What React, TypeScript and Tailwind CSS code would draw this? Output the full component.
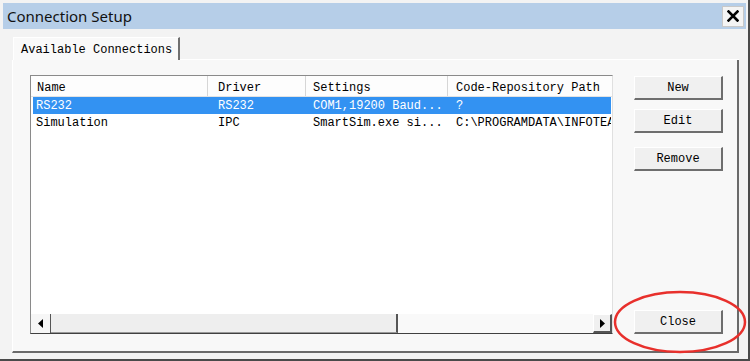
import React from "react";

const mono = { fontFamily: '"Liberation Mono", "DejaVu Sans Mono", monospace' };

function Btn({ label, className = "" }: { label: string; className?: string }) {
  return (
    <div
      className={`h-[24px] w-[89px] flex items-center justify-center bg-[#f0f0f0] border-t border-l border-t-[#ffffff] border-l-[#ffffff] border-r-2 border-b-2 border-r-[#6e6e6e] border-b-[#6e6e6e] text-[12px] text-black ${className}`}
      style={mono}
    >
      {label}
    </div>
  );
}

const rows = [
  { name: "RS232", driver: "RS232", settings: "COM1,19200 Baud...", path: "?", sel: true },
  { name: "Simulation", driver: "IPC", settings: "SmartSim.exe si...", path: "C:\\PROGRAMDATA\\INFOTEAM", sel: false },
];

export default function App() {
  return (
    <div className="relative w-[750px] h-[361px] overflow-hidden bg-[#f3f3f3]">
      <div className="absolute inset-0 flex flex-col pt-[3px] pl-[3px] pr-[2px] pb-[2px] border-r-[2px] border-b-[2px] border-r-[#4a4a4a] border-b-[#4a4a4a]">
        {/* title bar */}
        <div className="h-[26px] flex items-center justify-between bg-[#b6cee8] pl-[4px]">
          <span className="text-[15px] text-[#111] leading-none" style={{ fontFamily: '"Noto Sans", "Open Sans", sans-serif' }}>
            Connection Setup
          </span>
          <div className="w-[22px] h-[21px] mr-[2px] bg-[#f4f4f4] border border-[#c8c8c8] flex items-center justify-center">
            <svg width="12" height="12" viewBox="0 0 12 12">
              <path d="M1.5 1.5 L10.5 10.5 M10.5 1.5 L1.5 10.5" stroke="#000" strokeWidth="2.6" strokeLinecap="square" />
            </svg>
          </div>
        </div>
        {/* body */}
        <div className="flex-1 flex flex-col pl-[9px] pr-[7px] pt-[8px] pb-[4px]">
          <div className="flex items-end h-[23px]">
            <div
              className="h-[23px] w-[167px] ml-[1px] flex items-center pl-[7px] pt-[1px] bg-[#f9f9f9] border-t border-l border-white border-r-2 border-r-[#707070] text-[12px] text-black"
              style={mono}
            >
              Available Connections
            </div>
            <div className="flex-1 border-b border-white" />
          </div>
          <div className="flex-1 flex bg-[#f8f8f8] border-l border-white border-r-2 border-b-2 border-r-[#6a6a6a] border-b-[#6a6a6a] pl-[17px] pr-[16px] pt-[15px] pb-[17px] gap-[21px]">
            {/* list box */}
            <div className="w-[583px] flex flex-col bg-white border border-[#8a8a8a] border-b-[#404040] border-r-[#e0e0e0]" style={mono}>
              <div className="h-[21px] flex bg-[#fdfdfd] border-b border-[#e3e3e3] text-[12px] text-black">
                <div className="w-[177px] pl-[6px] pt-[3px] flex items-center border-r border-[#d6d6d6]">Name</div>
                <div className="w-[98px] pl-[10px] pt-[3px] flex items-center border-r border-[#d6d6d6]">Driver</div>
                <div className="w-[142px] pl-[7px] pt-[3px] flex items-center border-r border-[#d6d6d6]">Settings</div>
                <div className="flex-1 pl-[8px] pt-[3px] flex items-center overflow-hidden whitespace-nowrap">Code-Repository Path</div>
              </div>
              <div className="flex-1 flex flex-col pl-[2px] pr-[1px]">
                {rows.map((r) => (
                  <div
                    key={r.name}
                    className={`h-[17px] flex items-center pt-[1px] text-[12px] whitespace-nowrap ${r.sel ? "bg-[#3392f2] text-white" : "text-black"}`}
                  >
                    <div className="w-[175px] pl-[3px] overflow-hidden">{r.name}</div>
                    <div className="w-[98px] pl-[10px] overflow-hidden">{r.driver}</div>
                    <div className="w-[142px] pl-[7px] overflow-hidden">{r.settings}</div>
                    <div className="flex-1 pl-[8px] overflow-hidden">{r.path}</div>
                  </div>
                ))}
              </div>
              {/* horizontal scrollbar */}
              <div className="h-[19px] flex bg-[#f6f6f6]">
                <div className="w-[20px] flex items-center justify-center border-r border-[#555]">
                  <svg width="6" height="9" viewBox="0 0 6 9"><path d="M5 0 L0 4.5 L5 9 Z" fill="#000" /></svg>
                </div>
                <div className="w-[347px] bg-[#eeeeee] border-r-2 border-b border-r-[#555] border-b-[#999]" />
                <div className="flex-1 bg-[#f9f9f9]" />
                <div className="w-[19px] flex items-center justify-center bg-[#f0f0f0] border-t border-l border-white border-r-2 border-b-2 border-r-[#555] border-b-[#555]">
                  <svg width="6" height="9" viewBox="0 0 6 9"><path d="M1 0 L6 4.5 L1 9 Z" fill="#000" /></svg>
                </div>
              </div>
            </div>
            {/* buttons */}
            <div className="flex flex-col">
              <Btn label="New" className="mt-[1px]" />
              <Btn label="Edit" className="mt-[9px]" />
              <Btn label="Remove" className="mt-[14px]" />
              <div className="flex-1" />
              <Btn label="Close" />
            </div>
          </div>
        </div>
      </div>
      {/* red annotation ellipse */}
      <svg className="absolute left-[613px] top-[290px]" width="136" height="66" viewBox="0 0 136 66">
        <ellipse cx="67" cy="32" rx="65" ry="30" fill="none" stroke="#e8302c" strokeWidth="2.5" />
      </svg>
    </div>
  );
}
